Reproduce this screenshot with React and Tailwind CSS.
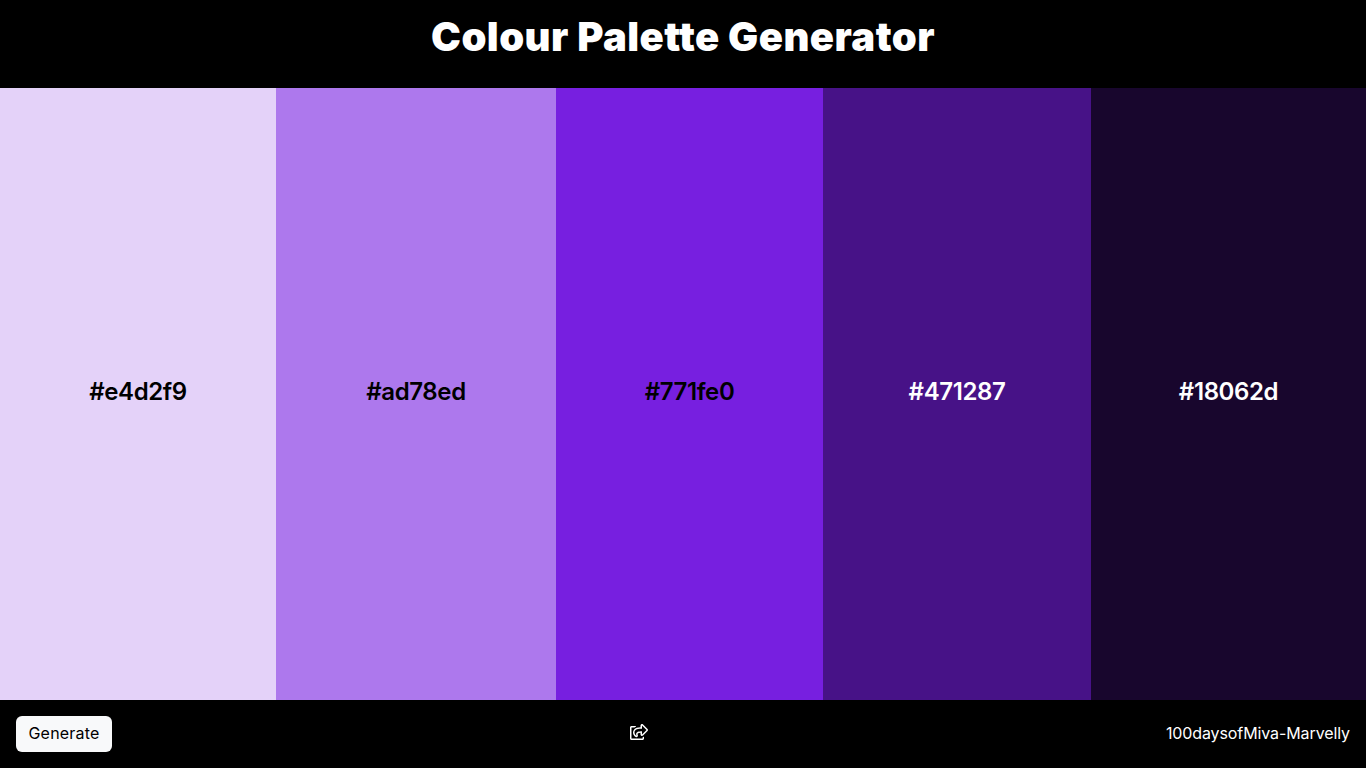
import React from 'react';
import { FaRegShareSquare } from 'react-icons/fa';

const colours = [
    { hex: '#e4d2f9', width: 'w-[276px]', bg: 'bg-[#e4d2f9]', text: 'text-black' },
    { hex: '#ad78ed', width: 'w-[280px]', bg: 'bg-[#ad78ed]', text: 'text-black' },
    { hex: '#771fe0', width: 'w-[267px]', bg: 'bg-[#771fe0]', text: 'text-black' },
    { hex: '#471287', width: 'w-[268px]', bg: 'bg-[#471287]', text: 'text-white' },
    { hex: '#18062d', width: 'w-[275px]', bg: 'bg-[#18062d]', text: 'text-white' },
];

const App = () => {
    return (
        <div className="h-screen flex flex-col bg-black font-['Inter',sans-serif] overflow-hidden">
            {/* Header */}
            <header className="h-[88px] shrink-0 flex justify-center pt-[13px]">
                <h1 className="text-[40px] leading-[48px] font-black text-white tracking-[0.45px]">
                    Colour Palette Generator
                </h1>
            </header>

            {/* Palette */}
            <main className="h-[612px] flex">
                {colours.map((colour) => (
                    <div
                        key={colour.hex}
                        className={`${colour.width} ${colour.bg} ${colour.text} flex items-center justify-center pb-[4px] text-2xl font-semibold tracking-[-0.4px]`}
                    >
                        {colour.hex}
                    </div>
                ))}
            </main>

            {/* Footer */}
            <footer className="h-[68px] flex items-center justify-between px-4 text-white">
                <button className="h-9 w-24 pb-[2px] rounded-md bg-[#f8f9fa] text-black text-base tracking-[0.2px]">Generate</button>
                <FaRegShareSquare size={18} className="ml-[1px] mt-[-5px]" />
                <span className="text-base mb-[2px] tracking-[-0.1px]">100daysofMiva-Marvelly</span>
            </footer>
        </div>
    );
};

export default App;
